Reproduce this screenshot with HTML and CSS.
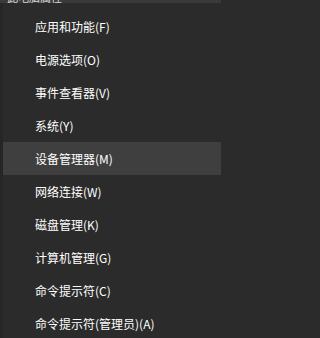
FILE: index.html
```html
<!DOCTYPE html>
<html lang="zh-CN">
<head>
<meta charset="utf-8">
<title>菜单</title>
<link rel="stylesheet" href="styles.css">
</head>
<body>
<div class="topstrip"><span class="topstrip-text">此电脑属性</span></div>
<div class="menu">
  <ul class="items">
    <li class="item">应用和功能(F)</li>
    <li class="item">电源选项(O)</li>
    <li class="item">事件查看器(V)</li>
    <li class="item">系统(Y)</li>
    <li class="item item-active">设备管理器(M)</li>
    <li class="item">网络连接(W)</li>
    <li class="item">磁盘管理(K)</li>
    <li class="item">计算机管理(G)</li>
    <li class="item">命令提示符(C)</li>
    <li class="item">命令提示符(管理员)(A)</li>
  </ul>
</div>
</body>
</html>
```
FILE: styles.css
```css
html, body {
  margin: 0;
  padding: 0;
}
body {
  width: 221px;
  height: 338px;
  overflow: hidden;
  background: #2b2b2b;
  font-family: "Microsoft YaHei", "Noto Sans CJK SC", "Noto Sans", sans-serif;
  color: #ffffff;
}
.topstrip {
  height: 3px;
  overflow: hidden;
  background: #3a3a3a;
  padding-left: 7px;
}
.topstrip-text {
  display: block;
  font-size: 11px;
  line-height: 13px;
  margin-top: -9px;
  color: #d8d8d8;
}
.menu {
  border-left: 3px solid #262626;
  padding-top: 7px;
}
.items {
  list-style: none;
  margin: 0;
  padding: 0;
}
.item {
  height: 33px;
  line-height: 33px;
  padding-left: 32px;
  font-size: 12px;
  white-space: nowrap;
}
.item-active {
  background: #3f3f3f;
}
```
